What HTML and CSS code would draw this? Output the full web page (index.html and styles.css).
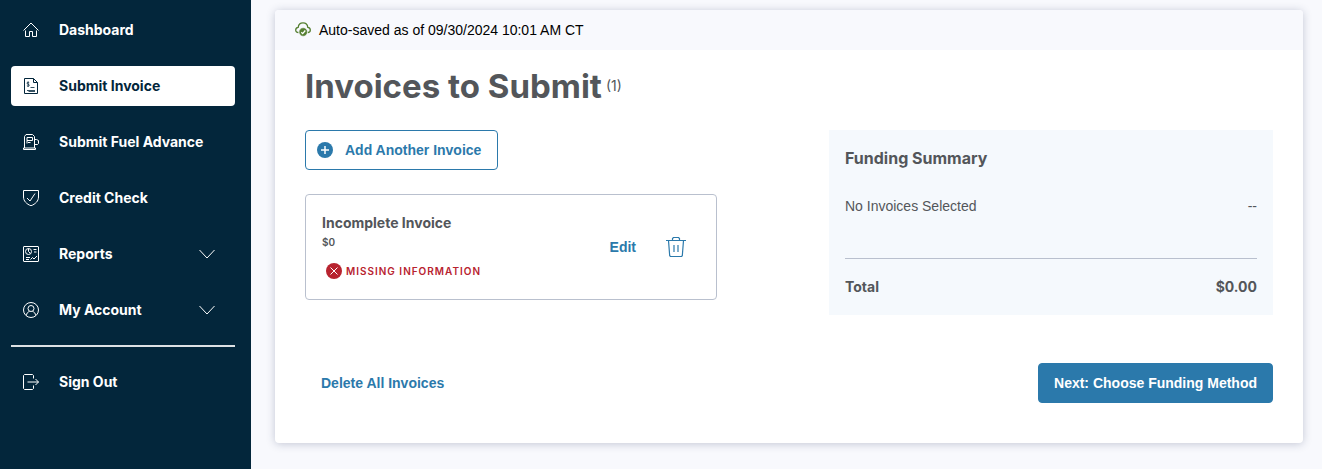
FILE: index.html
```html
<!DOCTYPE html>
<html lang="en">
<head>
<meta charset="utf-8">
<meta name="viewport" content="width=device-width, initial-scale=1">
<title>Invoices to Submit</title>
<link rel="stylesheet" href="styles.css">
</head>
<body>
<div class="app">
  <nav class="sidebar" aria-label="Main">
    <ul class="nav-list">
      <li><a class="nav-link" href="#">
        <svg class="icon" viewBox="0 0 16 16"><path d="M.5 8.500 8 1l7.500 7.500M2.500 8.500v6h4V9.500h3v5h4v-6"/></svg>
        <span class="nav-label">Dashboard</span></a></li>
      <li><a class="nav-link nav-link-active" href="#" aria-current="page">
        <svg class="icon" viewBox="0 0 16 16"><path d="M10.500.5h-9v15h13V4.500zM10.500.5v4h4"/><path class="thin" d="M6.200 4.600C5.500 4 4 4.100 4 5.200s2.300.8 2.300 2-1.600 1.300-2.400.6M5.100 3.500v5.300M7.500 9.500h4M4 12.500h8M5.500 13.500h6.500"/></svg>
        <span class="nav-label">Submit Invoice</span></a></li>
      <li><a class="nav-link" href="#">
        <svg class="icon" viewBox="0 0 16 16"><path d="M1.500 14V2.500l1.500-2h6.500l2 2V14M.5 15.500v-1.500h12v1.500zM4 3.500h5.500v3H4zM4 6.500v3M5 8.500h2.500M11.500 5.500h2l2 1v3l-1 1h-3"/></svg>
        <span class="nav-label">Submit Fuel Advance</span></a></li>
      <li><a class="nav-link" href="#">
        <svg class="icon" viewBox="0 0 16 16"><path d="M.5.500h15v6.500c0 4-3 7-7.500 8.800C3.500 14 .5 11 .5 7zM4 8l3 3 5-7.500"/></svg>
        <span class="nav-label">Credit Check</span></a></li>
      <li><a class="nav-link" href="#">
        <svg class="icon" viewBox="0 0 16 16"><rect x=".5" y=".5" width="15" height="15" rx=".5"/><circle cx="5.500" cy="5.500" r="3"/><path d="M5.500 2.500v3l2 2M10.500 3.500h3M11 6h2.500M3 11.500h4M3 13.500h3M7.500 13.500l2-2 1.500 1.500 3-3"/></svg>
        <span class="nav-label">Reports</span>
        <svg class="icon" viewBox="0 0 16 16"><path d="m.5 4 7.500 8 7.500-8"/></svg></a></li>
      <li><a class="nav-link" href="#">
        <svg class="icon" viewBox="0 0 16 16"><circle cx="8" cy="8" r="7.500"/><circle cx="8" cy="6.500" r="3"/><path d="M6.500 9.500C4.500 10 3.500 11.500 3.500 13.500M9.500 9.500c2 .5 3 2 3 4"/></svg>
        <span class="nav-label">My Account</span>
        <svg class="icon" viewBox="0 0 16 16"><path d="m.5 4 7.500 8 7.500-8"/></svg></a></li>
    </ul>
    <hr class="nav-divider">
    <a class="nav-link" href="#">
      <svg class="icon" viewBox="0 0 16 16"><path d="M10.500 4.500V1.500l-1-1H1.500l-1 1v13l1 1h8l1-1v-3M4.500 8h11M12.500 5l3 3-3 3"/></svg>
      <span class="nav-label">Sign Out</span></a>
  </nav>

  <main class="main">
    <section class="panel">
      <div class="save-bar" role="status">
        <svg class="save-icon" viewBox="0 0 16 16"><path d="M3.500 10.500C1.500 10.500.7 9.300.7 8c0-1.500 1-2.500 2.500-2.700C3.500 2.500 5.500.9 8 .9s4.500 1.600 4.800 4.400C14.300 5.500 15.300 6.500 15.300 8c0 1.300-.8 2.500-2.600 2.500"/><circle class="save-dot" cx="8.200" cy="10" r="4.200"/><path class="save-tick" d="m6.300 10.200 1.400 1.400L10.300 8.500"/></svg>
        <span>Auto-saved as of 09/30/2024 10:01 AM CT</span>
      </div>
      <div class="content">
        <div class="title-row">
          <h1 class="title">Invoices to Submit</h1>
          <span class="count">(1)</span>
        </div>
        <div class="columns">
          <div class="invoices">
            <button class="button button-outline" type="button">
              <svg class="add-icon" viewBox="0 0 16 16"><circle cx="8" cy="8" r="8"/><path d="M8 4v8M4 8h8"/></svg>
              Add Another Invoice
            </button>
            <article class="invoice">
              <div class="invoice-info">
                <h2 class="invoice-name">Incomplete Invoice</h2>
                <p class="invoice-amount">$0</p>
                <p class="invoice-error">
                  <svg class="error-icon" viewBox="0 0 16 16"><circle cx="8" cy="8" r="8"/><path d="m4.500 4.500 7 7m0-7-7 7"/></svg>
                  MISSING INFORMATION
                </p>
              </div>
              <div class="invoice-actions">
                <button class="text-button" type="button">Edit</button>
                <button class="icon-button" type="button" aria-label="Delete invoice">
                  <svg class="trash-icon" viewBox="0 0 20 20"><path d="M0 3.500h20M2.500 3.500l1.200 15.200.8.800h11l.8-.8 1.200-15.200M6.500 3.500V1.500l1-1h5l1 1v2M8 8v7M12 8v7"/></svg>
                </button>
              </div>
            </article>
          </div>
          <aside class="summary">
            <h2 class="summary-title">Funding Summary</h2>
            <div class="summary-row"><span>No Invoices Selected</span><span>--</span></div>
            <div class="summary-total"><span>Total</span><span>$0.00</span></div>
          </aside>
        </div>
        <div class="footer">
          <button class="text-button" type="button">Delete All Invoices</button>
          <button class="button button-primary" type="button">Next: Choose Funding Method</button>
        </div>
      </div>
    </section>
  </main>
</div>
</body>
</html>
```
FILE: styles.css
```css
:root {
  --navy: #03263b;
  --blue: #2b79ab;
  --gray: #53565a;
  --line: #b9c0ce;
  --red: #b8232f;
  --display: Inter, "Liberation Sans", sans-serif;
  --body: "Liberation Sans", Arial, sans-serif;
}

* { box-sizing: border-box; }

body {
  margin: 0;
  background: #f8f9fd;
  color: var(--gray);
  font: 14px/20px var(--body);
}

h1, h2, p { margin: 0; }

svg { display: block; flex: none; fill: none; }

button { cursor: pointer; }

.app { display: flex; min-height: 100vh; }

.sidebar {
  flex: none;
  width: 251px;
  padding: 10px 16px 10px 11px;
  background: var(--navy);
}

.nav-list {
  display: grid;
  gap: 16px;
  margin: 0;
  padding: 0;
  list-style: none;
}

.nav-link {
  display: flex;
  align-items: center;
  gap: 20px;
  height: 40px;
  padding: 0 20px 0 12px;
  border-radius: 4px;
  color: #fff;
  font: 700 14px/20px var(--display);
  text-decoration: none;
}

.nav-link-active { background: #fff; color: var(--navy); }

.nav-label { flex: 1; white-space: nowrap; }

.icon { width: 16px; height: 16px; stroke: currentColor; }

.thin { stroke-width: .8; }

.nav-divider {
  height: 2px;
  margin: 15px 0;
  border: 0;
  background: #dde1e4;
}

.main { flex: 1; min-width: 0; padding: 10px 19px 26px 24px; }

.panel {
  overflow: hidden;
  border-radius: 4px;
  background: #fff;
  box-shadow: 0 1px 8px rgba(40, 50, 90, .25);
}

.save-bar {
  display: flex;
  align-items: center;
  gap: 8px;
  height: 40px;
  padding: 0 20px;
  background: #f8f9fd;
  color: #000;
}

.save-icon { width: 16px; height: 16px; stroke: #557f31; stroke-width: 1.3; }
.save-dot { fill: #557f31; stroke: #f8f9fd; stroke-width: .5; }
.save-tick { stroke: #fff; }

.content { padding: 16px 30px 40px; }

.title-row { display: flex; align-items: center; gap: 4px; margin-bottom: 24px; }

.title { font: 700 33px/40px var(--display); }

.count { font: 14px/20px var(--display); }

.columns {
  display: grid;
  grid-template-columns: minmax(0, 412fr) minmax(0, 444fr);
  align-items: start;
  gap: 112px;
}

.button {
  display: inline-flex;
  align-items: center;
  height: 40px;
  border: 1px solid var(--blue);
  border-radius: 4px;
  font: bold 14px/20px var(--body);
  white-space: nowrap;
}

.button-outline { gap: 12px; padding: 0 16px 0 11px; background: #fff; color: var(--blue); }

.button-primary { padding: 0 15px; background: var(--blue); color: #fff; }

.add-icon { width: 16px; height: 16px; fill: var(--blue); }
.add-icon path { stroke: #fff; stroke-width: 1.5; }

.invoice {
  display: flex;
  align-items: center;
  justify-content: space-between;
  margin-top: 24px;
  padding: 18px 30px 18px 16px;
  border: 1px solid var(--line);
  border-radius: 4px;
}

.invoice-name { font: 700 14px/20px var(--display); }

.invoice-amount { font: 600 10px/18px var(--display); }

.invoice-error {
  display: flex;
  align-items: center;
  gap: 4px;
  margin-top: 10px;
  padding-left: 4px;
  color: var(--red);
  font: 600 10px/20px var(--display);
  letter-spacing: 1px;
}

.error-icon { width: 16px; height: 16px; fill: var(--red); }
.error-icon path { stroke: #fff; }

.invoice-actions { display: flex; align-items: center; gap: 14px; }

.text-button {
  padding: 10px 16px;
  border: 0;
  background: none;
  color: var(--blue);
  font: bold 14px/20px var(--body);
}

.icon-button { padding: 0; border: 0; background: none; }

.trash-icon { width: 20px; height: 20px; stroke: var(--blue); stroke-width: 1.2; }

.summary { padding: 16px; background: #f5f9fd; }

.summary-title { font: 700 16px/24px var(--display); }

.summary-row, .summary-total { display: flex; justify-content: space-between; }

.summary-row { margin: 26px 0 42px; }

.summary-total {
  padding: 18px 0 2px;
  border-top: 1px solid var(--line);
  font: 700 14px/20px var(--display);
}

.footer { display: flex; justify-content: space-between; margin-top: 48px; }
```
